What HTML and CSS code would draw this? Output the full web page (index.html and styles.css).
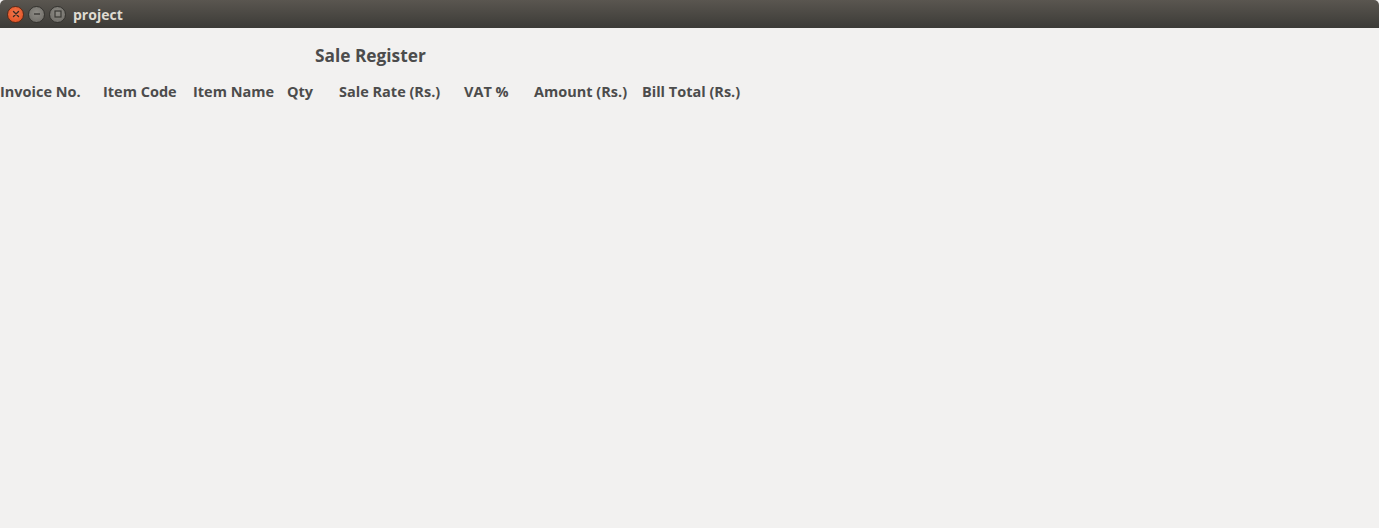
FILE: index.html
```html
<!DOCTYPE html>
<html>
<head>
<meta charset="utf-8">
<title>project</title>
<link rel="stylesheet" href="styles.css">
</head>
<body>
<div class="window">
  <div class="titlebar">
    <div class="controls">
      <span class="btn close"><svg width="8" height="8" viewBox="0 0 8 8"><path d="M1.5 1.5 L6.5 6.5 M6.5 1.5 L1.5 6.5" stroke="#3a2a22" stroke-width="1.4" stroke-linecap="round"/></svg></span>
      <span class="btn min"><svg width="8" height="8" viewBox="0 0 8 8"><path d="M1 4 H7" stroke="#3a3935" stroke-width="1.4"/></svg></span>
      <span class="btn max"><svg width="8" height="8" viewBox="0 0 8 8"><rect x="1" y="1" width="6" height="6" fill="none" stroke="#3a3935" stroke-width="1.2"/></svg></span>
    </div>
    <span class="title">project</span>
  </div>
  <div class="content">
    <h1 class="heading">Sale Register</h1>
    <div class="cols">
      <span class="c1">Invoice No.</span>
      <span class="c2">Item Code</span>
      <span class="c3">Item Name</span>
      <span class="c4">Qty</span>
      <span class="c5">Sale Rate (Rs.)</span>
      <span class="c6">VAT %</span>
      <span class="c7">Amount (Rs.)</span>
      <span class="c8">Bill Total (Rs.)</span>
    </div>
  </div>
</div>
</body>
</html>
```
FILE: styles.css
```css
html, body {
  margin: 0;
  padding: 0;
  background: #f2f1f0;
}
.window {
  width: 1379px;
  height: 528px;
  display: flex;
  flex-direction: column;
  font-family: "Open Sans", "DejaVu Sans", sans-serif;
}
.titlebar {
  height: 28px;
  flex: none;
  background: linear-gradient(#5a5650, #3c3b37);
  border-radius: 5px 5px 0 0;
  display: flex;
  align-items: center;
}
.controls {
  display: flex;
  gap: 4px;
  padding-left: 7px;
}
.btn {
  width: 15px;
  height: 15px;
  border-radius: 50%;
  display: flex;
  align-items: center;
  justify-content: center;
}
.close {
  background: radial-gradient(circle at 50% 40%, #f2784e, #df4b1c);
  border: 0.5px solid #5a2a18;
}
.min, .max {
  background: radial-gradient(circle at 50% 40%, #8f8d87, #6a6863);
  border: 0.5px solid #34332f;
}
.title {
  margin-left: 7px;
  color: #dfdbd2;
  font-weight: 700;
  font-size: 14px;
  font-family: "Open Sans", sans-serif;
}
.content {
  color: #4c4c4c;
  font-weight: 700;
}
.heading {
  margin: 17px 0 0 315px;
  font-size: 17.3px;
  line-height: 22px;
  font-weight: 700;
}
.cols {
  display: grid;
  grid-template-columns: 103px 90px 94px 52px 125px 70px 108px auto;
  font-size: 14.5px;
  line-height: 18px;
  margin-top: 16px;
}
```
